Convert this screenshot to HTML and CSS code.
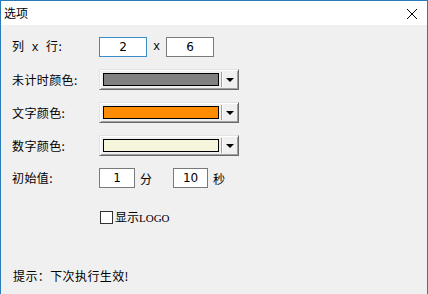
FILE: index.html
```html
<!DOCTYPE html>
<html lang="zh-CN">
  <head>
    <meta charset="UTF-8" />
    <meta name="viewport" content="width=device-width, initial-scale=1.0" />
    <title>选项</title>
    <link rel="stylesheet" href="styles.css">
  </head>
  <body>
    <div class="window">
      <div class="titlebar">
        <span class="title">选项</span>
        <svg class="close" width="12" height="12" viewBox="0 0 12 12">
          <path d="M1 1 L11 11 M11 1 L1 11" stroke="#000" stroke-width="1" fill="none" />
        </svg>
      </div>

      <div class="client">
        <div class="form">
          <div class="row">
            <span class="label">列<span class="mono"> x </span>行:</span>
            <input class="field field-focus field-grid" type="text" value="2" />
            <span class="times">x</span>
            <input class="field field-grid" type="text" value="6" />
          </div>

          <div class="row">
            <span class="label">未计时颜色:</span>
            <div class="combo">
              <span class="swatch" style="background-color: #808080"></span>
              <span class="combo-btn"><span class="arrow"></span></span>
            </div>
          </div>

          <div class="row">
            <span class="label">文字颜色:</span>
            <div class="combo">
              <span class="swatch" style="background-color: #ff8c00"></span>
              <span class="combo-btn"><span class="arrow"></span></span>
            </div>
          </div>

          <div class="row">
            <span class="label">数字颜色:</span>
            <div class="combo">
              <span class="swatch" style="background-color: #f5f5dc"></span>
              <span class="combo-btn"><span class="arrow"></span></span>
            </div>
          </div>

          <div class="row">
            <span class="label">初始值:</span>
            <input class="field field-min" type="text" value="1" />
            <span class="unit">分</span>
            <input class="field field-sec" type="text" value="10" />
            <span class="unit">秒</span>
          </div>
        </div>

        <label class="check">
          <span class="box"></span>
          <span class="check-text">显示<span class="logo">LOGO</span></span>
        </label>

        <p class="hint">提示：下次执行生效!</p>
      </div>
    </div>
  </body>
</html>
```

FILE: styles.css
```css
html,
body {
  margin: 0;
  padding: 0;
}

body {
  font-family: "Noto Sans CJK SC", "DejaVu Sans", sans-serif;
  font-size: 12px;
  color: #000;
  background-color: #f0f0f0;
}

.window {
  height: 294px;
  box-sizing: border-box;
  border: 1px solid #2b7ab9;
  border-bottom: none;
  background-color: #f0f0f0;
  display: flex;
  flex-direction: column;
}

.titlebar {
  height: 24px;
  background-color: #fff;
  display: flex;
  align-items: center;
  padding: 0 9px 0 3px;
}

.title {
  flex: 1;
  line-height: 16px;
}

.close {
  margin-top: 2px;
}

.client {
  padding: 12px 0 0 11px;
  display: flex;
  flex-direction: column;
}

.form {
  display: flex;
  flex-direction: column;
  gap: 12px;
}

.row {
  display: flex;
  align-items: center;
}

.label {
  width: 87px;
  line-height: 16px;
  letter-spacing: 0.4px;
}

.mono {
  font-family: "Liberation Mono", monospace;
  font-size: 12px;
  letter-spacing: 0;
}

.field {
  box-sizing: border-box;
  height: 20px;
  margin: 0;
  padding: 0;
  border: 1px solid #7a7a7a;
  background-color: #fff;
  font-family: "DejaVu Sans", sans-serif;
  font-size: 12px;
  text-align: center;
  color: #000;
  outline: none;
}

.field-focus {
  border-color: #3a8cc6;
}

.field-grid {
  width: 48px;
}

.times {
  width: 19px;
  text-align: center;
  font-family: "Liberation Mono", monospace;
  font-size: 12px;
}

.field-min {
  width: 36px;
}

.field-sec {
  width: 35px;
}

.unit {
  margin: 0 21px 0 5px;
}

.combo {
  box-sizing: border-box;
  width: 140px;
  height: 21px;
  display: flex;
  align-items: center;
  padding: 0 1px 0 3px;
  background-color: #f0f0f0;
  border: 1px solid;
  border-color: #e3e3e3 #696969 #696969 #e3e3e3;
  box-shadow: inset 1px 1px 0 #fff, inset -1px -1px 0 #a0a0a0;
}

.swatch {
  box-sizing: border-box;
  width: 116px;
  height: 13px;
  border: 1px solid #000;
}

.combo-btn {
  flex: 1;
  height: 15px;
  margin-left: 2px;
  border-left: 1px solid #a0a0a0;
  box-shadow: inset 1px 0 0 #fff;
  display: flex;
  align-items: center;
  justify-content: center;
}

.arrow {
  width: 0;
  height: 0;
  border-left: 4px solid transparent;
  border-right: 4px solid transparent;
  border-top: 4px solid #000;
}

.check {
  display: flex;
  align-items: center;
  margin: 21px 0 0 88px;
}

.box {
  box-sizing: border-box;
  width: 13px;
  height: 13px;
  border: 1px solid #333;
  background-color: #fff;
}

.check-text {
  margin-left: 2px;
  line-height: 16px;
}

.logo {
  font-family: "Liberation Serif", serif;
  font-size: 11px;
}

.hint {
  margin: 42px 0 0 1px;
  line-height: 16px;
  letter-spacing: 0.4px;
}
```
